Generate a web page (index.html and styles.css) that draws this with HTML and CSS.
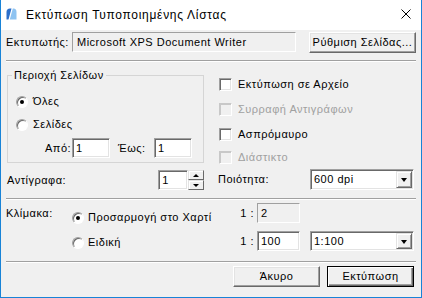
FILE: index.html
```html
<!doctype html>
<html lang="el">
    <head>
        <meta charset="UTF-8" />
        <meta name="viewport" content="width=device-width, initial-scale=1.0" />
        <title>Εκτύπωση Τυποποιημένης Λίστας</title>
        <link rel="stylesheet" href="styles.css">
    </head>
    <body>
        <div class="window">
            <!-- Title bar -->
            <div class="titlebar">
                <svg class="app-icon" width="11" height="12" viewBox="0 0 11 12">
                    <path d="M0.5 11.5 L0.5 4 Q0.5 0.5 4 0.5 L5.5 0.5 L2.5 11.5 Z" fill="#2c6fcb" />
                    <path d="M3.8 11.5 L6.8 0.5 L7.5 0.5 Q10.5 0.5 10.5 4 L10.5 11.5 Z" fill="#8ec3f1" />
                </svg>
                <span class="title">Εκτύπωση Τυποποιημένης Λίστας</span>
                <svg class="close-icon" width="10" height="10" viewBox="0 0 10 10">
                    <path d="M0.5 0.5 L9.5 9.5 M9.5 0.5 L0.5 9.5" stroke="#000" stroke-width="1" fill="none" />
                </svg>
            </div>

            <div class="dialog">
                <div class="printer-row">
                    <span class="printer-label">Εκτυπωτής:</span>
                    <div class="edit readonly printer-name">Microsoft XPS Document Writer</div>
                    <button class="btn setup-btn">Ρύθμιση Σελίδας...</button>
                </div>

                <div class="separator"></div>

                <div class="middle">
                    <div class="left-col">
                        <fieldset class="group">
                            <legend>Περιοχή Σελίδων</legend>
                            <div class="option"><span class="radio checked"></span>Όλες</div>
                            <div class="option"><span class="radio"></span>Σελίδες</div>
                            <div class="range-row">
                                <span class="range-label">Από:</span>
                                <div class="edit range-edit">1</div>
                                <span class="range-label to-label">Έως:</span>
                                <div class="edit range-edit">1</div>
                            </div>
                        </fieldset>

                        <div class="copies-row">
                            <span class="copies-label">Αντίγραφα:</span>
                            <div class="edit spin-edit">1</div>
                            <div class="spin-buttons">
                                <span class="spin-btn up"></span>
                                <span class="spin-btn down"></span>
                            </div>
                        </div>
                    </div>

                    <div class="right-col">
                        <div class="check-row"><span class="checkbox"></span>Εκτύπωση σε Αρχείο</div>
                        <div class="check-row disabled"><span class="checkbox"></span>Συρραφή Αντιγράφων</div>
                        <div class="check-row"><span class="checkbox"></span>Ασπρόμαυρο</div>
                        <div class="check-row disabled last"><span class="checkbox"></span>Διάστικτο</div>
                        <div class="quality-row">
                            <span class="quality-label">Ποιότητα:</span>
                            <div class="combo quality-combo">
                                <span class="combo-text">600 dpi</span>
                                <span class="combo-arrow"></span>
                            </div>
                        </div>
                    </div>
                </div>

                <div class="separator sep-scale"></div>

                <div class="scale">
                    <span class="scale-label">Κλίμακα:</span>
                    <div class="scale-options">
                        <div class="scale-option"><span class="radio checked"></span>Προσαρμογή στο Χαρτί</div>
                        <div class="scale-option"><span class="radio"></span>Ειδική</div>
                    </div>
                    <div class="scale-ratios">
                        <div class="ratio-row">
                            <span class="ratio-label">1 :</span>
                            <div class="edit readonly ratio-edit">2</div>
                        </div>
                        <div class="ratio-row">
                            <span class="ratio-label">1 :</span>
                            <div class="edit ratio-edit">100</div>
                            <div class="combo scale-combo">
                                <span class="combo-text">1:100</span>
                                <span class="combo-arrow"></span>
                            </div>
                        </div>
                    </div>
                </div>

                <div class="separator sep-actions"></div>

                <div class="actions">
                    <button class="btn action-btn">Άκυρο</button>
                    <button class="btn action-btn default">Εκτύπωση</button>
                </div>
            </div>
        </div>
    </body>
</html>
```

FILE: styles.css
```css
/*
 * Classic Windows dialog palette.
 */
:root {
    --face: #f0f0f0;
    --light: #e3e3e3;
    --shadow: #a0a0a0;
    --dark-shadow: #696969;
    --disabled-text: #a0a0a0;
    --accent: #1883d7;
}

* {
    box-sizing: border-box;
}

body {
    margin: 0;
    font-family: "Liberation Sans", Arial, sans-serif;
    font-size: 11px;
    line-height: 13px;
    letter-spacing: 0.5px;
    color: #000;
    background-color: #fff;
}

.window {
    width: 422px;
    height: 298px;
    display: flex;
    flex-direction: column;
    background-color: var(--face);
    border: 1px solid var(--accent);
    border-top: none;
}

/* Title bar */
.titlebar {
    height: 30px;
    flex: none;
    display: flex;
    align-items: center;
    background-color: #fff;
    padding: 0 10px 0 5px;
}
.app-icon {
    margin-right: 9px;
    margin-top: -3px;
}
.title {
    font-size: 12px;
    letter-spacing: 0.7px;
}
.close-icon {
    margin-left: auto;
    margin-top: -2px;
}

.dialog {
    padding: 2px 5px 0;
}

/* Shared controls */
.edit {
    height: 20px;
    background-color: #fff;
    border: 1px solid;
    border-color: var(--shadow) #fff #fff var(--shadow);
    box-shadow:
        inset 1px 1px var(--dark-shadow),
        inset -1px -1px var(--light);
    padding: 0 3px;
    line-height: 18px;
    white-space: nowrap;
    overflow: hidden;
}
.edit.readonly {
    background-color: var(--face);
    box-shadow: none;
}

.btn {
    font: inherit;
    letter-spacing: inherit;
    color: #000;
    background-color: var(--face);
    border: 1px solid;
    border-color: #fff var(--dark-shadow) var(--dark-shadow) #fff;
    box-shadow:
        inset -1px -1px var(--shadow),
        inset 1px 1px var(--light);
    padding: 0;
}
.btn.default {
    border-color: #000;
    box-shadow:
        inset 1px 1px #fff,
        inset -1px -1px var(--dark-shadow),
        inset -2px -2px var(--shadow);
}

.separator {
    height: 2px;
    flex: none;
    border-top: 1px solid var(--shadow);
    border-bottom: 1px solid #fff;
    margin-top: 7px;
}

.radio {
    width: 12px;
    height: 12px;
    flex: none;
    display: flex;
    align-items: center;
    justify-content: center;
    border-radius: 50%;
    background-color: #fff;
    border: 1px solid;
    border-color: var(--shadow) #fff #fff var(--shadow);
    box-shadow: inset 1px 1px var(--dark-shadow);
}
.radio.checked::after {
    content: "";
    width: 4px;
    height: 4px;
    border-radius: 50%;
    background-color: #000;
}

.checkbox {
    width: 13px;
    height: 13px;
    flex: none;
    background-color: #fff;
    border: 1px solid;
    border-color: var(--shadow) #fff #fff var(--shadow);
    box-shadow:
        inset 1px 1px var(--dark-shadow),
        inset -1px -1px var(--light);
    margin: 0 6px 0 1px;
}

.combo {
    display: flex;
    height: 21px;
    background-color: #fff;
    border: 1px solid;
    border-color: var(--shadow) #fff #fff var(--shadow);
    box-shadow:
        inset 1px 1px var(--dark-shadow),
        inset -1px -1px var(--light);
    padding: 1px;
}
.combo-text {
    flex: 1;
    padding-left: 2px;
    line-height: 17px;
}
.combo-arrow {
    width: 16px;
    flex: none;
    display: flex;
    align-items: center;
    justify-content: center;
    background-color: var(--face);
    border: 1px solid;
    border-color: var(--light) var(--dark-shadow) var(--dark-shadow) var(--light);
    box-shadow:
        inset 1px 1px #fff,
        inset -1px -1px var(--shadow);
}
.combo-arrow::after {
    content: "";
    border-left: 3.5px solid transparent;
    border-right: 3.5px solid transparent;
    border-top: 4px solid #000;
    margin-top: 1px;
}

/* Printer row */
.printer-row {
    display: flex;
    align-items: flex-start;
    height: 21px;
}
.printer-label {
    width: 66px;
    line-height: 21px;
}
.printer-name {
    width: 224px;
    padding-left: 4px;
}
.setup-btn {
    width: 107px;
    height: 21px;
    margin-left: 13px;
}

/* Page range and options */
.middle {
    display: flex;
    height: 128px;
}
.left-col {
    width: 198px;
    flex: none;
}
.group {
    margin: 7px 0 0 1px;
    width: 197px;
    min-width: 0;
    padding: 8px 0 4px 4px;
    border: 1px solid #d5d5d5;
}
.group legend {
    padding: 0 2px;
    line-height: 13px;
}
.option {
    height: 23px;
    display: flex;
    align-items: center;
}
.option .radio {
    margin: 0 5px 0 4px;
}
.range-row {
    display: flex;
    align-items: center;
    height: 20px;
    margin-top: 2px;
    padding-left: 33px;
}
.range-label {
    width: 27px;
}
.to-label {
    width: 36px;
    margin-left: 8px;
}
.range-edit {
    width: 38px;
}

.copies-row {
    display: flex;
    align-items: center;
    height: 20px;
    margin-top: 7px;
}
.copies-label {
    width: 153px;
    padding-left: 1px;
}
.spin-edit {
    width: 30px;
}
.spin-buttons {
    width: 16px;
    height: 20px;
    display: flex;
    flex-direction: column;
}
.spin-btn {
    flex: 1;
    display: flex;
    align-items: center;
    justify-content: center;
    background-color: var(--face);
    border: 1px solid;
    border-color: var(--light) var(--dark-shadow) var(--dark-shadow) var(--light);
    box-shadow: inset 1px 1px #fff;
}
.spin-btn::after {
    content: "";
    border-left: 3px solid transparent;
    border-right: 3px solid transparent;
}
.spin-btn.up::after {
    border-bottom: 3px solid #000;
}
.spin-btn.down::after {
    border-top: 3px solid #000;
}

.right-col {
    margin-left: 14px;
    flex: 1;
    display: flex;
    flex-direction: column;
    padding-top: 10px;
}
.check-row {
    height: 25px;
    display: flex;
    align-items: center;
}
.check-row:nth-child(3) {
    height: 24px;
}
.check-row.last {
    height: 23px;
}
.check-row.disabled {
    color: var(--disabled-text);
}
.check-row.disabled .checkbox {
    background-color: var(--face);
    border-color: #c8c8c8 #fff #fff #c8c8c8;
    box-shadow: inset 1px 1px #c8c8c8;
}
.quality-row {
    display: flex;
    align-items: center;
    height: 21px;
}
.quality-label {
    width: 92px;
}
.quality-combo {
    width: 104px;
}

/* Scale */
.sep-scale {
    margin-top: 8px;
}
.scale {
    display: flex;
    height: 51px;
}
.scale-label {
    width: 66px;
    padding-top: 7px;
}
.scale-options {
    display: flex;
    flex-direction: column;
    gap: 12px;
    padding-top: 11px;
}
.scale-option {
    height: 13px;
    display: flex;
    align-items: center;
}
.scale-option .radio {
    margin-right: 4px;
}
.scale-ratios {
    margin: 0 2px 0 auto;
    width: 174px;
    display: flex;
    flex-direction: column;
    gap: 8px;
    padding-top: 3px;
}
.ratio-row {
    display: flex;
    align-items: center;
    height: 20px;
}
.ratio-label {
    width: 17px;
    text-align: right;
    padding-right: 3px;
}
.ratio-edit {
    width: 43px;
}
.scale-combo {
    width: 104px;
    height: 20px;
    margin-left: 10px;
}

/* Dialog buttons */
.sep-actions {
    margin-top: 10px;
}
.actions {
    display: flex;
    justify-content: flex-end;
    gap: 7px;
    margin-top: 3px;
    padding-right: 2px;
}
.action-btn {
    width: 87px;
    height: 21px;
}
```
